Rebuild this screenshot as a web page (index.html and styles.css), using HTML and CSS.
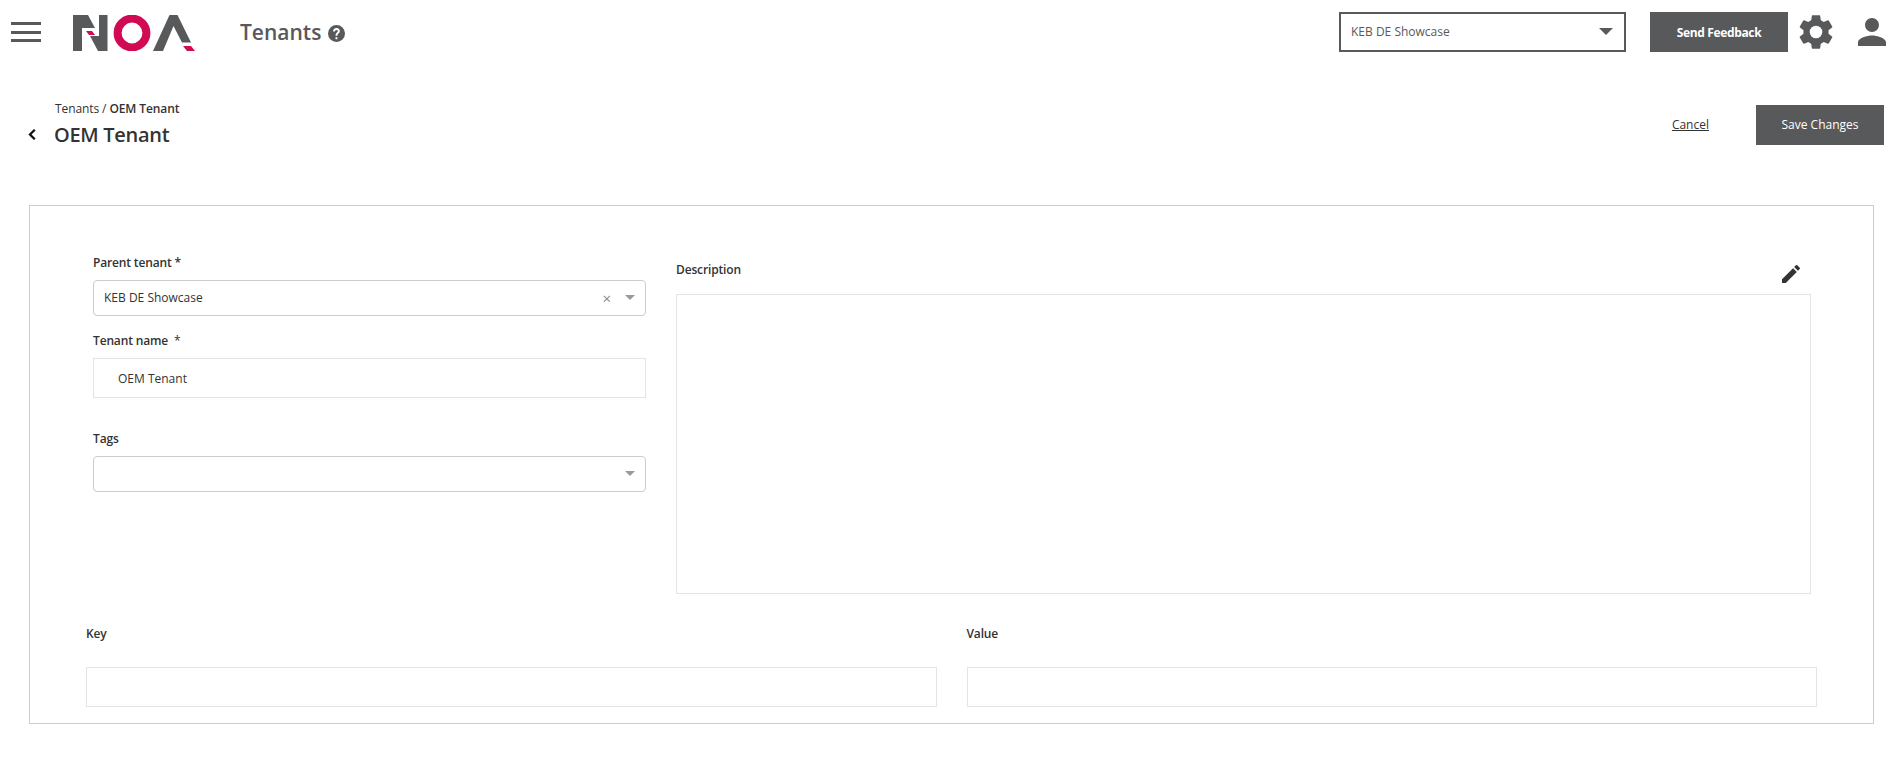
FILE: index.html
```html
<!DOCTYPE html>
<html lang="en">
<head>
    <meta charset="UTF-8">
    <meta name="viewport" content="width=device-width, initial-scale=1.0">
    <title>Tenants</title>
    <link rel="stylesheet" href="styles.css">
</head>
<body>
    <!-- Top bar -->
    <header class="topbar">
        <div class="menu-icon"><span></span><span></span><span></span></div>
        <svg class="logo" width="122" height="36" viewBox="0 0 122 36">
            <path fill="#58595b" d="M0 0H15L22 13H9V36H0Z"/>
            <path fill="#58595b" d="M26 0H34.500V36H25L17 21H26Z"/>
            <path fill="#d10a54" d="M13 16H19L22 20H16Z"/>
            <circle cx="59" cy="18" r="14.400" fill="none" stroke="#d10a54" stroke-width="8"/>
            <path fill="#58595b" d="M80 36L96.500 0H104.500L118 27.500H109L100.500 11L90 36Z"/>
            <path fill="#d10a54" d="M110 31H118L122 36H114Z"/>
        </svg>
        <h1 class="page-name">Tenants</h1>
        <svg class="help-icon" width="17" height="17" viewBox="0 0 24 24">
            <path fill="#58595b" d="M12 0a12 12 0 1 0 0 24a12 12 0 0 0 0-24zm1.300 20h-2.700v-2.700h2.700zm2.700-9.100c-.9 1.200-2.600 1.600-2.700 4.100h-2.700c0-3.400 1.800-4 2.800-5 1.100-1.100.5-3-1.400-3-1.500 0-2.200 1.200-2.300 2.300H7.100C7.200 6.700 9 4.200 12 4.200c3.900 0 5.900 3.700 4 6.700z"/>
        </svg>
        <div class="tenant-select">
            <span>KEB DE Showcase</span>
            <i class="caret"></i>
        </div>
        <button class="btn btn-feedback">Send Feedback</button>
        <svg class="gear-icon" width="42" height="42" viewBox="0 0 24 24">
            <path fill="#58595b" d="M19.140 12.940c.04-.3.06-.61.06-.94s-.02-.64-.07-.94l2.030-1.580a.49.49 0 0 0 .12-.61l-1.920-3.320a.49.49 0 0 0-.59-.22l-2.390.96a7 7 0 0 0-1.620-.94l-.36-2.540a.48.48 0 0 0-.48-.41h-3.840a.47.47 0 0 0-.47.41l-.36 2.540c-.59.24-1.130.57-1.620.94l-2.390-.96a.49.49 0 0 0-.59.22L2.740 8.870a.48.48 0 0 0 .12.61l2.030 1.580c-.05.3-.09.63-.09.94s.02.64.07.94l-2.030 1.580a.49.49 0 0 0-.12.61l1.920 3.320c.12.22.37.29.59.22l2.390-.96c.5.38 1.030.7 1.620.94l.36 2.540c.05.24.24.41.48.41h3.840c.24 0 .44-.17.47-.41l.36-2.540c.59-.24 1.130-.56 1.620-.94l2.390.96c.22.08.47 0 .59-.22l1.920-3.320a.48.48 0 0 0-.12-.61zM12 15.600a3.600 3.600 0 1 1 0-7.200a3.600 3.600 0 0 1 0 7.200z"/>
        </svg>
        <svg class="user-icon" width="34" height="34" viewBox="0 0 24 24">
            <path fill="#58595b" d="M12 12c2.700 0 4.900-2.200 4.900-4.900S14.700 2.200 12 2.200 7.100 4.400 7.100 7.100 9.300 12 12 12zm0 2.400c-3.300 0-9.900 1.600-9.900 4.900v2.500h19.800v-2.500c0-3.300-6.600-4.900-9.900-4.900z"/>
        </svg>
    </header>

    <!-- Page heading -->
    <section class="page-head">
        <svg class="back-icon" width="8" height="11" viewBox="0 0 8 11">
            <path fill="none" stroke="#111" stroke-width="2.300" d="M6.800 .8L2 5.500L6.800 10.200"/>
        </svg>
        <div class="page-title">
            <div class="breadcrumb">Tenants / <b>OEM Tenant</b></div>
            <h2>OEM Tenant</h2>
        </div>
        <a class="cancel-link" href="#">Cancel</a>
        <button class="btn btn-save">Save Changes</button>
    </section>

    <!-- Tenant form -->
    <main class="card">
        <div class="form-top">
            <div class="form-left">
                <label class="label-parent">Parent tenant *</label>
                <div class="combo">
                    <span>KEB DE Showcase</span>
                    <em class="clear">×</em>
                    <i class="caret-small"></i>
                </div>
                <label class="label-name">Tenant name <span class="req">*</span></label>
                <div class="text-input">OEM Tenant</div>
                <label class="label-tags">Tags</label>
                <div class="combo">
                    <span></span>
                    <i class="caret-small"></i>
                </div>
            </div>
            <div class="form-right">
                <div class="desc-head">
                    <label>Description</label>
                    <svg class="edit-icon" width="24" height="24" viewBox="0 0 24 24">
                        <path fill="#333" d="M3 17.250V21h3.750L17.810 9.940l-3.750-3.750L3 17.250zM20.710 7.040a1 1 0 0 0 0-1.410l-2.340-2.340a1 1 0 0 0-1.410 0l-1.830 1.830 3.750 3.750 1.830-1.830z"/>
                    </svg>
                </div>
                <div class="desc-box"></div>
            </div>
        </div>
        <div class="form-bottom">
            <div class="kv-col">
                <label>Key</label>
                <div class="kv-input"></div>
            </div>
            <div class="kv-col">
                <label>Value</label>
                <div class="kv-input"></div>
            </div>
        </div>
    </main>
</body>
</html>
```

FILE: styles.css
```css
body {
    font-family: "Open Sans", Arial, sans-serif;
    margin: 0;
    padding: 0;
    background-color: #fff;
    color: #333;
    font-size: 12px;
}
button {
    font-family: inherit;
    border: none;
    cursor: pointer;
}
.btn {
    background-color: #58595b;
    color: #fff;
    font-size: 12px;
}

/* top bar */
.topbar {
    display: flex;
    align-items: center;
    height: 64px;
    padding: 0 13px 0 11px;
}
.menu-icon {
    width: 30px;
    height: 20px;
    display: flex;
    flex-direction: column;
    justify-content: space-between;
    margin-right: 32px;
}
.menu-icon span {
    display: block;
    height: 3px;
    background-color: #58595b;
}
.logo {
    margin-right: 45px;
    margin-top: 2px;
}
.page-name {
    margin: 0 7px 0 0;
    font-size: 21px;
    font-weight: 600;
    color: #58595b;
}
.help-icon {
    margin: 2px auto 0 0;
}
.tenant-select {
    box-sizing: border-box;
    width: 287px;
    height: 40px;
    border: 2px solid #58595b;
    display: flex;
    align-items: center;
    justify-content: space-between;
    padding: 0 11px 1px 10px;
    color: #58595b;
    margin-right: 24px;
}
.caret {
    width: 0;
    height: 0;
    border-left: 7px solid transparent;
    border-right: 7px solid transparent;
    border-top: 7px solid #58595b;
}
.btn-feedback {
    width: 138px;
    height: 40px;
    font-weight: 700;
    letter-spacing: -0.35px;
    margin-right: 7px;
}
.gear-icon {
    margin-right: 18px;
}

/* page heading */
.page-head {
    display: flex;
    align-items: flex-start;
    height: 104px;
    padding: 37px 18px 0 28px;
}
.back-icon {
    margin: 28px 19px 0 0;
}
.page-title {
    flex: 1;
}
.breadcrumb {
    line-height: 16px;
    letter-spacing: -0.1px;
}
.breadcrumb b {
    font-weight: 600;
}
.page-title h2 {
    margin: 4px 0 0 -1px;
    font-size: 20px;
    line-height: 27px;
    font-weight: 600;
    letter-spacing: -0.3px;
}
.cancel-link {
    color: #333;
    font-weight: 500;
    margin: 16px 47px 0 0;
    line-height: 16px;
}
.btn-save {
    width: 128px;
    height: 40px;
    margin-top: 4px;
    padding-bottom: 3px;
    font-weight: 400;
}

/* form card */
.card {
    box-sizing: border-box;
    height: 519px;
    margin: 0 28px 0 29px;
    border: 1px solid #ccc;
    padding: 0 56px;
}
label {
    display: block;
    font-weight: 600;
    line-height: 16px;
    letter-spacing: -0.15px;
}
.req {
    font-weight: 400;
    margin-left: 3px;
}
.form-top {
    display: flex;
    height: 388px;
}
.form-left {
    width: 553px;
    margin: 0 30px 0 7px;
}
.label-parent {
    margin: 49px 0 9px;
}
.label-name {
    margin: 17px 0 9px;
}
.label-tags {
    margin: 33px 0 9px;
}
.combo {
    box-sizing: border-box;
    height: 36px;
    border: 1px solid #ccc;
    border-radius: 4px;
    display: flex;
    align-items: center;
    padding: 0 10px 1px 10px;
    color: #333;
}
.combo span {
    flex: 1;
}
.clear {
    font-style: normal;
    font-size: 15px;
    color: #888;
    margin-right: 14px;
}
.caret-small {
    width: 0;
    height: 0;
    border-left: 5px solid transparent;
    border-right: 5px solid transparent;
    border-top: 5px solid #999;
}
.text-input {
    box-sizing: border-box;
    height: 40px;
    border: 1px solid #e4e4e4;
    padding-left: 24px;
    line-height: 39px;
}
.form-right {
    width: 1135px;
}
.desc-head {
    display: flex;
    justify-content: space-between;
    height: 88px;
}
.desc-head label {
    margin-top: 56px;
}
.edit-icon {
    margin: 56px 8px 0 0;
}
.desc-box {
    box-sizing: border-box;
    height: 300px;
    border: 1px solid #e4e4e4;
}
.form-bottom {
    display: flex;
    gap: 30px;
}
.kv-col {
    flex: 1;
}
.kv-col label {
    margin-top: 32px;
}
.kv-input {
    box-sizing: border-box;
    height: 40px;
    margin-top: 25px;
    border: 1px solid #e4e4e4;
}
```
